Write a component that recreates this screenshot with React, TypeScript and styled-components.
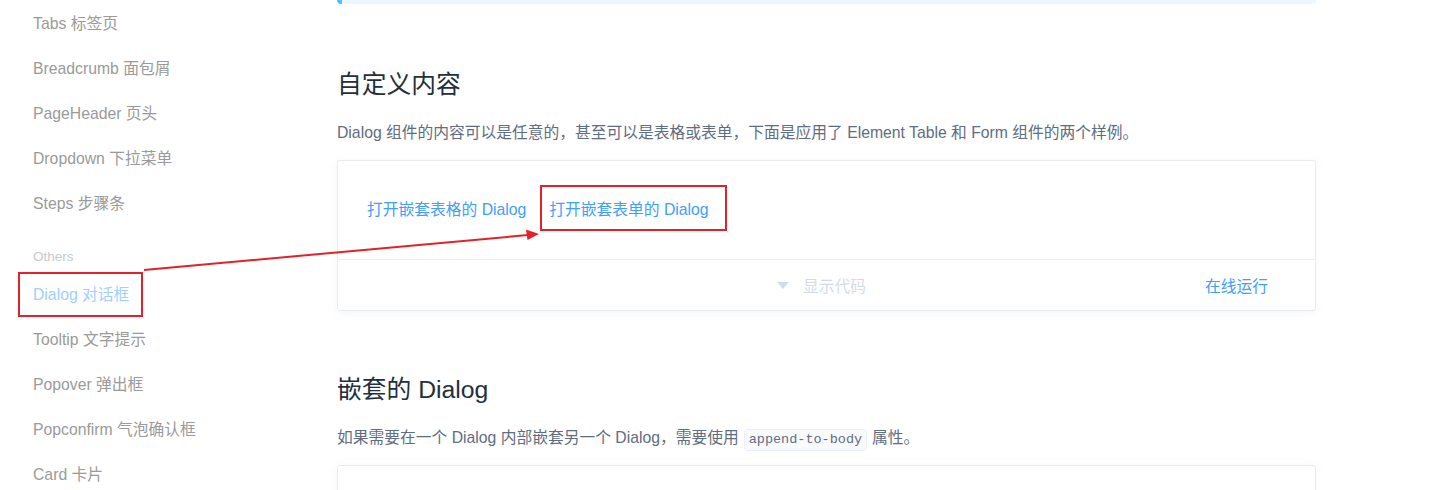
import React from 'react';
import styled, { createGlobalStyle } from 'styled-components';

const GlobalStyle = createGlobalStyle`
  html, body {
    margin: 0;
    padding: 0;
    background: #fff;
    overflow: hidden;
  }
  body {
    font-family: 'Liberation Sans', 'Noto Sans CJK SC', sans-serif;
  }
`;

const Page = styled.div`
  position: relative;
  display: flex;
  align-items: flex-start;
  width: 1451px;
  height: 490px;
  overflow: hidden;
`;

const Sidebar = styled.nav`
  width: 337px;
  flex: none;
  padding: 1px 0 0 33px;
  box-sizing: border-box;
`;

const NavItem = styled.div<{ active?: boolean }>`
  position: relative;
  height: 45px;
  line-height: 45px;
  font-size: 15.75px;
  color: ${({ active }) => (active ? '#a0cfff' : '#9a9a9a')};
  white-space: nowrap;
`;

const GroupTitle = styled.div`
  padding: 18px 0 2px;
  line-height: 26px;
  font-size: 13.5px;
  color: #c8c9cc;
`;

const Highlight = styled.span<{ left: number; top: number; w: number; h: number }>`
  position: absolute;
  left: ${({ left }) => left}px;
  top: ${({ top }) => top}px;
  width: ${({ w }) => w}px;
  height: ${({ h }) => h}px;
  border: 2px solid #e3212b;
  box-sizing: border-box;
  pointer-events: none;
`;

const Main = styled.main`
  width: 979px;
  flex: none;
  display: flex;
  flex-direction: column;

  & > * {
    flex: none;
  }
`;

const Tip = styled.div`
  margin-top: -36px;
  height: 40px;
  background: #ecf8ff;
  border-left: 5px solid #50bfff;
  border-radius: 4px;
  box-sizing: border-box;
`;

const Heading = styled.h3<{ gap: number }>`
  margin: ${({ gap }) => gap}px 0 0;
  font-size: 24.75px;
  line-height: 30px;
  font-weight: 400;
  color: #1f2f3d;
`;

const Para = styled.p`
  margin: 22px 0 0;
  font-size: 15.75px;
  line-height: 21px;
  color: #5e6d82;
  white-space: nowrap;
`;

const Code = styled.code`
  display: inline-block;
  margin: 0 5px;
  padding: 0 4px;
  line-height: 20px;
  font-family: 'Liberation Mono', 'DejaVu Sans Mono', monospace;
  font-size: 13.5px;
  color: #5e6d82;
  background: #f9fafc;
  border: 1px solid #eaeefb;
  border-radius: 4px;
`;

const DemoBlock = styled.div<{ h?: number; gap: number }>`
  margin-top: ${({ gap }) => gap}px;
  border: 1px solid #ebebeb;
  border-radius: 3px;
  box-shadow: 0 2px 6px rgba(232, 237, 250, 0.5);
  ${({ h }) => (h ? `height: ${h}px;` : '')}
`;

const Source = styled.div`
  height: 98px;
  display: flex;
  align-items: center;
  gap: 23px;
  padding: 0 29px;
`;

const TextButton = styled.span`
  position: relative;
  font-size: 15.75px;
  line-height: 20px;
  color: #409eff;
  cursor: pointer;
  white-space: nowrap;
`;

const Control = styled.div`
  position: relative;
  height: 50px;
  border-top: 1px solid #eaeefb;
  display: flex;
  align-items: center;
  justify-content: center;
  color: #d3dce6;
  font-size: 15.75px;
`;

const Toggle = styled.span`
  display: flex;
  align-items: center;
  gap: 14px;
  margin-left: -10px;
`;

const Caret = styled.span`
  width: 0;
  height: 0;
  border-left: 6px solid transparent;
  border-right: 6px solid transparent;
  border-top: 7px solid #d3dce6;
`;

const RunLink = styled.span`
  position: absolute;
  right: 47px;
  color: #409eff;
  font-size: 15.75px;
`;

const Arrow = styled.svg`
  position: absolute;
  left: 0;
  top: 0;
  pointer-events: none;
`;

const upper = ['Tabs 标签页', 'Breadcrumb 面包屑', 'PageHeader 页头', 'Dropdown 下拉菜单', 'Steps 步骤条'];
const lower = ['Tooltip 文字提示', 'Popover 弹出框', 'Popconfirm 气泡确认框', 'Card 卡片'];

export default function App() {
  return (
    <Page>
      <GlobalStyle />
      <Sidebar>
        {upper.map((t) => (
          <NavItem key={t}>{t}</NavItem>
        ))}
        <GroupTitle>Others</GroupTitle>
        <NavItem active>
          Dialog 对话框
          <Highlight left={-15} top={0} w={125} h={45} />
        </NavItem>
        {lower.map((t) => (
          <NavItem key={t}>{t}</NavItem>
        ))}
      </Sidebar>
      <Main>
        <Tip />
        <Heading gap={66}>自定义内容</Heading>
        <Para>
          Dialog 组件的内容可以是任意的，甚至可以是表格或表单，下面是应用了 Element Table 和 Form 组件的两个样例。
        </Para>
        <DemoBlock gap={17}>
          <Source>
            <TextButton>打开嵌套表格的 Dialog</TextButton>
            <TextButton>
              打开嵌套表单的 Dialog
              <Highlight left={-9} top={-15} w={187} h={46} />
            </TextButton>
          </Source>
          <Control>
            <Toggle>
              <Caret />
              显示代码
            </Toggle>
            <RunLink>在线运行</RunLink>
          </Control>
        </DemoBlock>
        <Heading gap={64}>嵌套的 Dialog</Heading>
        <Para>
          如果需要在一个 Dialog 内部嵌套另一个 Dialog，需要使用<Code>append-to-body</Code>属性。
        </Para>
        <DemoBlock gap={14} h={120} />
      </Main>
      <Arrow width="1451" height="490" viewBox="0 0 1451 490">
        <line x1="144" y1="270" x2="528" y2="235" stroke="#e3212b" strokeWidth="2" />
        <polygon points="539,234 526,229.5 527.5,240" fill="#e3212b" />
      </Arrow>
    </Page>
  );
}
